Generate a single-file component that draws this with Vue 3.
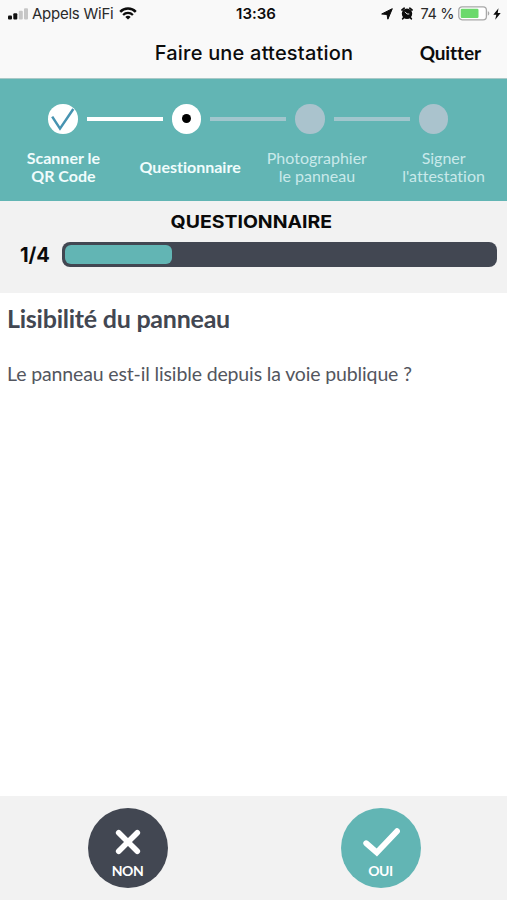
<script setup>
const steps = [
  { lines: ['Scanner le', 'QR Code'], state: 'done' },
  { lines: ['Questionnaire'], state: 'current' },
  { lines: ['Photographier', 'le panneau'], state: 'todo' },
  { lines: ['Signer', "l'attestation"], state: 'todo' },
]
const progress = 25
</script>

<template>
  <div class="screen">
    <header class="top">
      <div class="status">
        <div class="status-left">
          <svg class="signal" width="20" height="12" viewBox="0 0 20 12">
            <rect x="0" y="7.5" width="4" height="4" rx="1" fill="#111" />
            <rect x="5.3" y="5.3" width="4" height="6.2" rx="1" fill="#111" />
            <rect x="10.8" y="2.8" width="4" height="8.7" rx="1" fill="#c6c6c6" />
            <rect x="16" y="0.3" width="4" height="11.2" rx="1" fill="#c6c6c6" />
          </svg>
          <span class="carrier">Appels WiFi</span>
          <svg class="wifi" width="18" height="13" viewBox="0 0 18 13" fill="none" stroke="#0c0c0c">
            <path d="M1.2 4.9C5.4 .4 12.6 .4 16.8 4.9" stroke-width="2.5" />
            <path d="M4.1 7.9C6.8 5.1 11.2 5.1 13.9 7.9" stroke-width="2.2" />
            <path d="M6.3 9.9C7.8 8.4 10.2 8.4 11.7 9.9L9 12.6Z" fill="#0c0c0c" stroke="none" />
          </svg>
        </div>
        <span class="clock">13:36</span>
        <div class="status-right">
          <svg class="locate" width="12" height="12" viewBox="0 0 12 12">
            <path d="M11.3.7 6.9 11.2 6 6.5.7 6Z" fill="#0c0c0c" stroke="#0c0c0c" stroke-width="1" stroke-linejoin="round" />
          </svg>
          <svg class="alarm" width="12" height="13" viewBox="0 0 12 13">
            <circle cx="6" cy="6.8" r="5.2" fill="#0c0c0c" />
            <path d="M1 3 3.2 1.2M11 3 8.8 1.2M2.7 10.6 1.7 11.8M9.3 10.6l1 1.2" stroke="#0c0c0c" stroke-width="1.7" stroke-linecap="round" />
            <path d="M4 4.8 6 7h2.3" fill="none" stroke="#f9f9f9" stroke-width=".9" />
          </svg>
          <span class="level">74 %</span>
          <svg class="battery" width="32" height="15" viewBox="0 0 32 15">
            <rect x=".8" y=".8" width="27.6" height="13" rx="3.3" fill="#fff" stroke="#a8a8a8" stroke-width="1.3" />
            <rect x="2.7" y="2.7" width="17.8" height="9.2" rx="1.2" fill="#6bd96c" />
            <path d="M29.8 5.2c2 .7 2 3.6 0 4.3Z" fill="#a8a8a8" />
          </svg>
          <svg class="bolt" width="8" height="12" viewBox="0 0 8 12">
            <path d="M5.5.2.3 6.8h3L2.2 11.8 7.7 4.9h-3Z" fill="#0c0c0c" />
          </svg>
        </div>
      </div>
      <div class="nav">
        <h1 class="title">Faire une attestation</h1>
        <button class="quit">Quitter</button>
      </div>
    </header>

    <section class="stepper">
      <div class="track">
        <template v-for="(step, i) in steps" :key="i">
          <span v-if="i" class="link" :class="{ reached: step.state !== 'todo' }"></span>
          <span class="dot" :class="step.state">
            <svg v-if="step.state === 'done'" width="30" height="30" viewBox="0 0 30 30">
              <path d="M4.2 12.6 12 24.6 25.3 5" fill="none" stroke="#4793b1" stroke-width="2.5" />
            </svg>
          </span>
        </template>
      </div>
      <div class="labels">
        <div v-for="(step, i) in steps" :key="i" class="label" :class="step.state">
          <span v-for="line in step.lines" :key="line">{{ line }}</span>
        </div>
      </div>
    </section>

    <section class="progress">
      <h2 class="heading">QUESTIONNAIRE</h2>
      <div class="meter">
        <span class="count">1/4</span>
        <div class="bar"><div class="fill" :style="{ width: progress + '%' }"></div></div>
      </div>
    </section>

    <main class="question">
      <h3 class="subject">Lisibilité du panneau</h3>
      <p class="text">Le panneau est-il lisible depuis la voie publique ?</p>
    </main>

    <footer class="answers">
      <div class="cell">
        <button class="answer no">
          <svg width="40" height="32" viewBox="0 0 40 32">
            <path d="M10.7 6.7 29.3 25.3M29.3 6.7 10.7 25.3" stroke="#fff" stroke-width="5.6" stroke-linecap="round" />
          </svg>
          <span>NON</span>
        </button>
      </div>
      <div class="cell">
        <button class="answer yes">
          <svg width="40" height="32" viewBox="0 0 40 32">
            <path d="M5.2 17.2 15.8 26.4 36 5.2" fill="none" stroke="#fff" stroke-width="5.8" stroke-linecap="round" />
          </svg>
          <span>OUI</span>
        </button>
      </div>
    </footer>
  </div>
</template>

<style>
body { margin: 0; background: #fff; }
</style>

<style scoped>
.screen {
  display: flex;
  flex-direction: column;
  width: 507px;
  height: 900px;
  overflow: hidden;
  background: #fff;
  font-family: Lato, sans-serif;
  font-variant-ligatures: none;
  color: #424752;
}
h1, h2, h3, p { margin: 0; }
button { border: 0; padding: 0; background: none; font-variant-ligatures: none; }
.top {
  height: 79px;
  box-sizing: border-box;
  background: #f9f9f9;
  border-bottom: 1px solid #a9c9c7;
  font-family: Inter, sans-serif;
  color: #0c0c0c;
}
.status {
  display: grid;
  grid-template-columns: 1fr auto 1fr;
  align-items: center;
  height: 27px;
  padding: 0 6px 0 8px;
}
.status-left, .status-right { display: flex; align-items: center; }
.status-right { justify-content: flex-end; }
.carrier { margin-left: 4px; font-size: 15px; line-height: 27px; letter-spacing: -0.25px; white-space: nowrap; color: #2a2a2a; }
.wifi { margin-left: 6px; }
.clock { padding-left: 3px; font-size: 15px; font-weight: 600; line-height: 27px; }
.alarm { margin-left: 8px; }
.level { margin-left: 8px; font-size: 14.5px; letter-spacing: -0.4px; white-space: nowrap; color: #2a2a2a; }
.battery { margin-left: 4px; }
.bolt { margin-left: 3px; }
.nav {
  display: grid;
  grid-template-columns: 1fr auto 1fr;
  align-items: center;
  height: 51px;
}
.title { grid-column: 2; padding-left: 1px; font-size: 20px; font-weight: 500; line-height: 50px; letter-spacing: 0.2px; white-space: nowrap; }
.quit {
  justify-self: end;
  margin-right: 26px;
  font-family: Lato, sans-serif;
  font-size: 19px;
  font-weight: 700;
  line-height: 50px;
  letter-spacing: -0.1px;
  color: #0c0c0c;
}
.stepper { height: 122px; background: #62b5b4; }
.track { display: flex; align-items: center; gap: 9px; padding: 25px 0 0 48px; }
.dot {
  display: grid;
  place-items: center;
  width: 29.5px;
  height: 29.5px;
  border-radius: 50%;
  background: #fff;
}
.dot.current::after { content: ''; width: 9px; height: 9px; border-radius: 50%; background: #000; }
.dot.todo { background: #aac3cd; }
.link { width: 76px; height: 4px; background: #a1c6cd; }
.link.reached { background: #fff; }
.labels { display: grid; grid-template-columns: repeat(4, 1fr); height: 67px; }
.label {
  display: flex;
  flex-direction: column;
  align-items: center;
  justify-content: center;
  font-size: 16px;
  line-height: 18.5px;
  font-weight: 700;
  color: #f0fcfc;
  white-space: nowrap;
}
.label.todo { font-weight: 400; color: #c9e9ea; }
.progress { height: 92px; background: #f2f2f2; color: #0a0a0a; font-family: Inter, sans-serif; }
.heading {
  padding-top: 9px;
  font-size: 18px;
  line-height: 23px;
  font-weight: 700;
  text-align: center;
  transform: scaleX(1.08) translateX(-2px);
}
.meter { display: flex; align-items: center; margin-top: 9px; padding: 0 10px 0 20px; }
.count { width: 42px; font-size: 20px; line-height: 24px; font-weight: 700; letter-spacing: -0.1px; }
.bar {
  flex: 1;
  box-sizing: border-box;
  height: 25px;
  padding: 3px;
  border-radius: 8px;
  background: #424752;
}
.fill { height: 19px; border-radius: 6px; background: #62b5b4; }
.question { flex: 1; padding: 0 7px; }
.subject { padding-top: 10px; font-size: 25px; line-height: 30px; font-weight: 700; letter-spacing: -0.24px; white-space: nowrap; }
.text { padding-top: 29px; font-size: 19.5px; line-height: 24px; letter-spacing: -0.14px; white-space: nowrap; color: #53565e; }
.answers {
  display: grid;
  grid-template-columns: 1fr 1fr;
  height: 104px;
  padding-left: 1px;
  background: #f2f2f2;
}
.cell { display: flex; justify-content: center; align-items: center; }
.answer {
  display: flex;
  flex-direction: column;
  align-items: center;
  box-sizing: border-box;
  width: 80px;
  height: 80px;
  padding-top: 18px;
  border-radius: 50%;
  font-family: Lato, sans-serif;
  font-size: 14px;
  font-weight: 700;
  line-height: 16px;
  letter-spacing: -0.4px;
  color: #fff;
}
.answer span { margin-top: 5px; }
.no { background: #424752; }
.yes { background: #62b5b4; }
</style>
